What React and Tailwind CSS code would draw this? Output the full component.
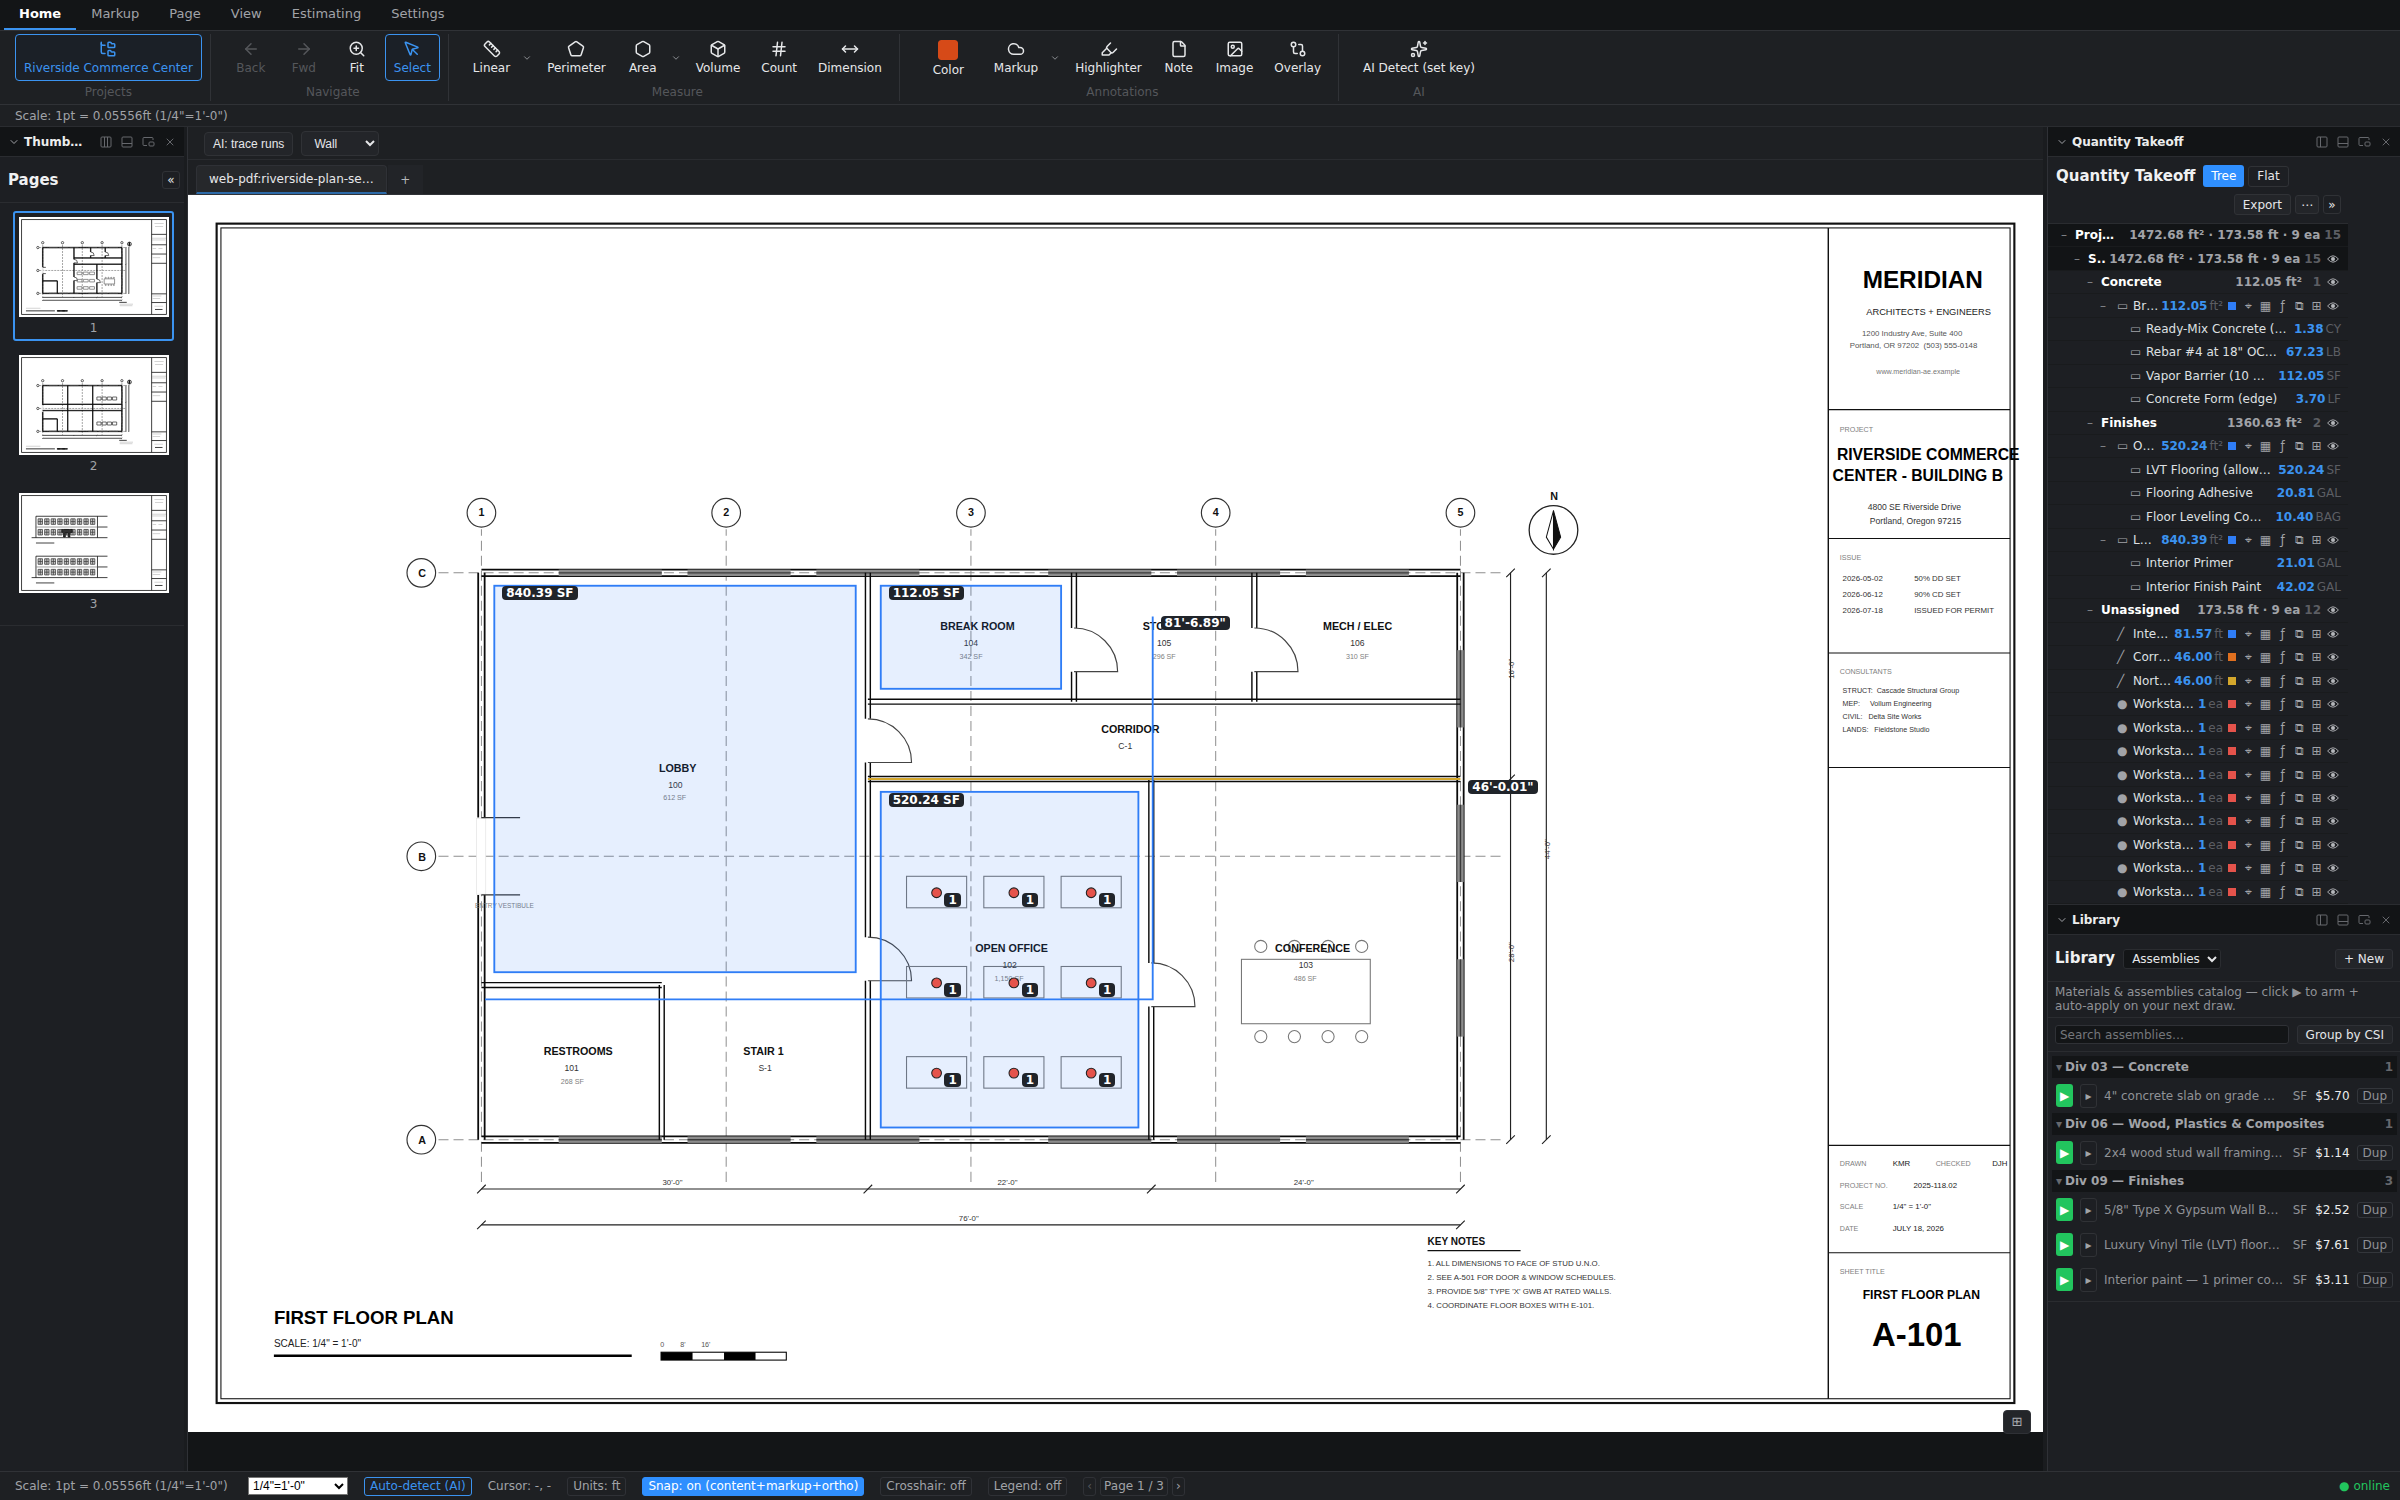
import React, { useState } from "react";
import {
  ArrowLeft,
  ArrowRight,
  Box,
  ChevronDown,
  Cloud,
  FolderTree,
  GitCompare,
  Hash,
  Hexagon,
  Highlighter,
  Image,
  MousePointer,
  MoveHorizontal,
  Pentagon,
  Ruler,
  Sparkles,
  File,
  X,
  ZoomIn,
} from "lucide-react";

const SHEET_W = 2592;
const SHEET_H = 1728;

// 1/4" = 1'-0" => 18pt per foot
const fx = (ft) => 410 + ft * 18;
const fy = (ft) => 528 + ft * 18;

const menuTabs = ["Home", "Markup", "Page", "View", "Estimating", "Settings"];

const ribbonGroups = [
  {
    name: "Projects",
    tools: [{ label: "Riverside Commerce Center", icon: FolderTree, active: true }],
  },
  {
    name: "Navigate",
    tools: [
      { label: "Back", icon: ArrowLeft, disabled: true },
      { label: "Fwd", icon: ArrowRight, disabled: true },
      { label: "Fit", icon: ZoomIn },
      { label: "Select", icon: MousePointer, active: true },
    ],
  },
  {
    name: "Measure",
    tools: [
      { label: "Linear", icon: Ruler, menu: true },
      { label: "Perimeter", icon: Pentagon },
      { label: "Area", icon: Hexagon, menu: true },
      { label: "Volume", icon: Box },
      { label: "Count", icon: Hash },
      { label: "Dimension", icon: MoveHorizontal },
    ],
  },
  {
    name: "Annotations",
    tools: [
      { label: "Color", color: true },
      { label: "Markup", icon: Cloud, menu: true },
      { label: "Highlighter", icon: Highlighter },
      { label: "Note", icon: File },
      { label: "Image", icon: Image },
      { label: "Overlay", icon: GitCompare },
    ],
  },
  {
    name: "AI",
    tools: [{ label: "AI Detect (set key)", icon: Sparkles }],
  },
];

const BLUE = "#2f7df6";
const ORANGE = "#e0701f";
const YELLOW = "#d4a72c";
const RED = "#e5534b";

const workstations = Array.from({ length: 9 }, () => (
  { kind: "item", icon: "●", name: "Worksta…", qty: "1", unit: "ea", color: RED }
));

const takeoffRows = [
  { kind: "group", level: 0, name: "Proj…", qty: "1472.68 ft² · 173.58 ft · 9 ea", count: 15, dark: true },
  { kind: "group", level: 1, name: "S..", qty: "1472.68 ft² · 173.58 ft · 9 ea", count: 15, dark: true, eye: true },
  { kind: "group", level: 2, name: "Concrete", qty: "112.05 ft²", count: 1, eye: true },
  { kind: "item", open: true, icon: "▭", name: "Br…", qty: "112.05", unit: "ft²", color: BLUE },
  { kind: "part", name: "Ready-Mix Concrete (…", qty: "1.38", unit: "CY" },
  { kind: "part", name: "Rebar #4 at 18\" OC…", qty: "67.23", unit: "LB" },
  { kind: "part", name: "Vapor Barrier (10 …", qty: "112.05", unit: "SF" },
  { kind: "part", name: "Concrete Form (edge)", qty: "3.70", unit: "LF" },
  { kind: "group", level: 2, name: "Finishes", qty: "1360.63 ft²", count: 2, eye: true },
  { kind: "item", open: true, icon: "▭", name: "O…", qty: "520.24", unit: "ft²", color: BLUE },
  { kind: "part", name: "LVT Flooring (allow…", qty: "520.24", unit: "SF" },
  { kind: "part", name: "Flooring Adhesive", qty: "20.81", unit: "GAL" },
  { kind: "part", name: "Floor Leveling Co…", qty: "10.40", unit: "BAG" },
  { kind: "item", open: true, icon: "▭", name: "L…", qty: "840.39", unit: "ft²", color: BLUE },
  { kind: "part", name: "Interior Primer", qty: "21.01", unit: "GAL" },
  { kind: "part", name: "Interior Finish Paint", qty: "42.02", unit: "GAL" },
  { kind: "group", level: 2, name: "Unassigned", qty: "173.58 ft · 9 ea", count: 12, eye: true },
  { kind: "item", icon: "╱", name: "Inte…", qty: "81.57", unit: "ft", color: BLUE },
  { kind: "item", icon: "╱", name: "Corr…", qty: "46.00", unit: "ft", color: ORANGE },
  { kind: "item", icon: "╱", name: "Nort…", qty: "46.00", unit: "ft", color: YELLOW },
  ...workstations,
];

const library = [
  {
    title: "Div 03 — Concrete",
    items: [{ name: "4\" concrete slab on grade …", price: "$5.70" }],
  },
  {
    title: "Div 06 — Wood, Plastics & Composites",
    items: [{ name: "2x4 wood stud wall framing…", price: "$1.14" }],
  },
  {
    title: "Div 09 — Finishes",
    items: [
      { name: "5/8\" Type X Gypsum Wall B…", price: "$2.52" },
      { name: "Luxury Vinyl Tile (LVT) floor…", price: "$7.61" },
      { name: "Interior paint — 1 primer co…", price: "$3.11" },
    ],
  },
];

const deskCols = [1046, 1154, 1262];
const deskRows = [975, 1101, 1227];
const deskSpots = deskRows.flatMap((y) => deskCols.map((x) => ({ x, y })));

/* ---------- drawing ---------- */

function Wall({ x1, y1, x2, y2, t = 3.4, w = 2 }) {
  const d = x1 === x2
    ? `M${x1 - t} ${y1}V${y2}M${x1 + t} ${y1}V${y2}`
    : `M${x1} ${y1 - t}H${x2}M${x1} ${y1 + t}H${x2}`;
  return <path d={d} fill="none" stroke="#0a0a0a" strokeWidth={w} />;
}

function Door({ x, y }) {
  return (
    <path
      d={`M${x} ${y - 61}A61 61 0 0 1 ${x + 61} ${y}H${x}`}
      fill="none"
      stroke="#444"
      strokeWidth="1.6"
    />
  );
}

function WindowRun({ x, y, length, vertical }) {
  const w = vertical ? 9 : length;
  const h = vertical ? length : 9;
  const left = vertical ? x - 4.5 : x;
  const top = vertical ? y : y - 4.5;
  return (
    <g>
      <rect x={left} y={top} width={w} height={h} fill="#8c8c8c" />
      <path
        d={vertical ? `M${x} ${y}v${length}` : `M${x} ${y}h${length}`}
        stroke="#3a3a3a"
        strokeWidth="2"
      />
    </g>
  );
}

function SheetFrame() {
  return (
    <g fill="none" stroke="#111">
      <rect x="40" y="40" width="2512" height="1648" strokeWidth="3" />
      <rect x="46" y="46" width="2500" height="1636" strokeWidth="1.5" />
      <path d="M2292 46V1682" strokeWidth="2" />
      <path
        d="M2292 300H2546M2292 480H2546M2292 640H2546M2292 800H2546M2292 1328H2546M2292 1478H2546"
        strokeWidth="1.6"
      />
    </g>
  );
}

function GridLines() {
  return (
    <g>
      <g stroke="#8f8f8f" strokeWidth="1.4" strokeDasharray="14 7" fill="none">
        {[0, 19, 38, 57, 76].map((ft) => (
          <path key={ft} d={`M${fx(ft)} 467V1379`} strokeDashoffset="5" />
        ))}
        {[0, 22, 44].map((ft) => (
          <path key={ft} d={`M350 ${fy(ft)}H1834`} />
        ))}
      </g>
      <g fill="#fff" stroke="#333" strokeWidth="1.6">
        {[0, 19, 38, 57, 76].map((ft) => (
          <circle key={ft} cx={fx(ft)} cy="444" r="20" />
        ))}
        {[0, 22, 44].map((ft) => (
          <circle key={ft} cx="326" cy={fy(ft)} r="20" />
        ))}
      </g>
    </g>
  );
}

function Shell() {
  return (
    <g>
      <Wall x1={fx(0)} y1={fy(0)} x2={fx(76)} y2={fy(0)} t={4.5} w={2.5} />
      <Wall x1={fx(0)} y1={fy(44)} x2={fx(76)} y2={fy(44)} t={4.5} w={2.5} />
      <Wall x1={fx(0)} y1={fy(0)} x2={fx(0)} y2={870} t={4.5} w={2.5} />
      <Wall x1={fx(0)} y1={978} x2={fx(0)} y2={fy(44)} t={4.5} w={2.5} />
      <Wall x1={fx(76)} y1={fy(0)} x2={fx(76)} y2={fy(44)} t={4.5} w={2.5} />
      {[6, 16, 26, 44, 54, 64].map((ft) => (
        <g key={ft}>
          <WindowRun x={fx(ft)} y={fy(0)} length={144} />
          <WindowRun x={fx(ft)} y={fy(44)} length={144} />
        </g>
      ))}
      {[6, 18, 30].map((ft) => (
        <WindowRun key={ft} x={fx(76)} y={fy(ft)} length={108} vertical />
      ))}
      <rect x="403" y="871" width="13" height="106" fill="#fff" stroke="#e4e4e4" strokeWidth="1" />
    </g>
  );
}

function Dimensions() {
  const tick = (x, y) => `M${x - 6} ${y + 6}L${x + 6} ${y - 6}`;
  return (
    <g fill="none" stroke="#222" strokeWidth="1.6">
      <path d={`M${fx(0)} 1389H${fx(76)}M${fx(0)} 1439H${fx(76)}`} />
      <path d={`M1848 ${fy(0)}V${fy(44)}M1898 ${fy(0)}V${fy(44)}`} />
      <path d={[0, 30, 52, 76].map((ft) => tick(fx(ft), 1389)).join("")} />
      <path d={[0, 76].map((ft) => tick(fx(ft), 1439)).join("")} />
      <path d={[0, 16, 44].map((ft) => tick(1848, fy(ft))).join("")} />
      <path d={[0, 44].map((ft) => tick(1898, fy(ft))).join("")} />
    </g>
  );
}

function SheetExtras() {
  return (
    <g>
      <path d="M120 1622H620" stroke="#000" strokeWidth="3.5" />
      <rect x="661" y="1617" width="175" height="11" fill="#fff" stroke="#000" strokeWidth="1.5" />
      <path d="M661 1617h44v11h-44zM749 1617h44v11h-44z" fill="#000" />
      <circle cx="1908" cy="468" r="34" fill="#fff" stroke="#222" strokeWidth="1.8" />
      <path d="M1908 441L1898 478L1908 495Z" fill="#fff" stroke="#111" strokeWidth="1.4" />
      <path d="M1908 441L1918 478L1908 495Z" fill="#111" stroke="#111" strokeWidth="1.4" />
      <path d="M1732 1475H1862" stroke="#111" strokeWidth="2" />
    </g>
  );
}

function FirstFloor() {
  const chairs = [1499, 1546, 1593, 1640];
  return (
    <g>
      <GridLines />
      <Shell />
      <path d={`M${fx(0)} 870h54M${fx(0)} 978h54`} stroke="#333" strokeWidth="1.8" />
      <Wall x1={fx(30)} y1={fy(0)} x2={fx(30)} y2={732} />
      <Wall x1={fx(30)} y1={793} x2={fx(30)} y2={1037} />
      <Wall x1={fx(30)} y1={1098} x2={fx(30)} y2={fy(44)} />
      <Door x={fx(30)} y={793} />
      <Door x={fx(30)} y={1098} />
      <Wall x1={fx(30)} y1={fy(10)} x2={fx(76)} y2={fy(10)} />
      <Wall x1={fx(30)} y1={fy(16)} x2={fx(76)} y2={fy(16)} />
      <Wall x1={fx(52)} y1={fy(16)} x2={fx(52)} y2={1073} />
      <Wall x1={fx(52)} y1={1134} x2={fx(52)} y2={fy(44)} />
      <Door x={fx(52)} y={1134} />
      <Wall x1={fx(46)} y1={fy(0)} x2={fx(46)} y2={605} />
      <Wall x1={fx(46)} y1={666} x2={fx(46)} y2={fy(10)} />
      <Door x={fx(46)} y={666} />
      <Wall x1={fx(60)} y1={fy(0)} x2={fx(60)} y2={605} />
      <Wall x1={fx(60)} y1={666} x2={fx(60)} y2={fy(10)} />
      <Door x={fx(60)} y={666} />
      <Wall x1={fx(0)} y1={fy(32)} x2={fx(14)} y2={fy(32)} />
      <Wall x1={fx(14)} y1={fy(32)} x2={fx(14)} y2={fy(44)} />
      <g fill="none" stroke="#777" strokeWidth="1.5">
        {deskSpots.map(({ x, y }) => (
          <rect key={`${x}-${y}`} x={x - 42} y={y - 23} width="84" height="44" />
        ))}
        <rect x="1472" y="1068" width="180" height="90" />
        {chairs.map((x) => (
          <g key={x}>
            <circle cx={x} cy="1050" r="8.5" />
            <circle cx={x} cy="1176" r="8.5" />
          </g>
        ))}
      </g>
      <Dimensions />
      <SheetExtras />
    </g>
  );
}

const roomLabels = [
  [658, 806, "LOBBY", 671, "100", 664, "612 SF"],
  [1051, 608, "BREAK ROOM", 1084, "104", 1078, "342 SF"],
  [1334, 608, "STORAGE", 1354, "105", 1348, "296 SF"],
  [1586, 608, "MECH / ELEC", 1624, "106", 1618, "310 SF"],
  [1276, 752, "CORRIDOR", 1300, "C-1"],
  [1100, 1058, "OPEN OFFICE", 1138, "102", 1127, "1,150 SF"],
  [1519, 1058, "CONFERENCE", 1552, "103", 1545, "486 SF"],
  [497, 1202, "RESTROOMS", 526, "101", 521, "268 SF"],
  [776, 1202, "STAIR 1", 797, "S-1"],
];

function T({ x, y, s = 10, b, c = "#111", children, ...rest }) {
  return (
    <text
      x={x}
      y={y}
      fontSize={s}
      fontWeight={b ? 700 : 400}
      fill={c}
      className="whitespace-pre"
      {...rest}
    >
      {children}
    </text>
  );
}

function SheetText() {
  const gray = "#808080";
  return (
    <g fontFamily="'Liberation Sans', Arial, sans-serif">
      {[0, 19, 38, 57, 76].map((ft, i) => (
        <T key={ft} x={fx(ft)} y="449" s={15} b textAnchor="middle">{i + 1}</T>
      ))}
      {["C", "B", "A"].map((name, i) => (
        <T key={name} x="327" y={fy(i * 22) + 6} s={15} b textAnchor="middle">{name}</T>
      ))}
      <T x="1909" y="426" s={15} b textAnchor="middle">N</T>

      {roomLabels.map(([x, y, name, nx, num, ax, area]) => (
        <g key={name}>
          <T x={x} y={y} s={15} b>{name}</T>
          <T x={nx} y={y + 22} s={12} c="#333">{num}</T>
          {area && <T x={ax} y={y + 40} s={10} c={gray}>{area}</T>}
        </g>
      ))}
      <T x="401" y="996" s={9} c={gray}>ENTRY VESTIBULE</T>

      <T x={fx(15) - 17} y="1384" s={11} c="#333">30'-0"</T>
      <T x={fx(41) - 17} y="1384" s={11} c="#333">22'-0"</T>
      <T x={fx(64) - 17} y="1384" s={11} c="#333">24'-0"</T>
      <T x={fx(38) - 17} y="1434" s={11} c="#333">76'-0"</T>
      <T x="0" y="0" s={11} c="#333" transform="translate(1853 676) rotate(-90)">16'-0"</T>
      <T x="0" y="0" s={11} c="#333" transform="translate(1853 1072) rotate(-90)">28'-0"</T>
      <T x="0" y="0" s={11} c="#333" transform="translate(1903 928) rotate(-90)">44'-0"</T>

      <T x="120" y="1577" s={26} b c="#000">FIRST FLOOR PLAN</T>
      <T x="120" y="1610" s={14} c="#222">SCALE: 1/4" = 1'-0"</T>
      <T x="660" y="1610" s={10} c="#555">0</T>
      <T x="688" y="1610" s={10} c="#555">8'</T>
      <T x="717" y="1610" s={10} c="#555">16'</T>

      <T x="1732" y="1467" s={14} b>KEY NOTES</T>
      <T x="1732" y="1496" s={11} c="#333">1. ALL DIMENSIONS TO FACE OF STUD U.N.O.</T>
      <T x="1732" y="1516" s={11} c="#333">2. SEE A-501 FOR DOOR & WINDOW SCHEDULES.</T>
      <T x="1732" y="1535" s={11} c="#333">3. PROVIDE 5/8" TYPE 'X' GWB AT RATED WALLS.</T>
      <T x="1732" y="1555" s={11} c="#333">4. COORDINATE FLOOR BOXES WITH E-101.</T>

      <T x="2340" y="130" s={34} b c="#000">MERIDIAN</T>
      <T x="2345" y="168" s={13} c="#222">ARCHITECTS + ENGINEERS</T>
      <T x="2339" y="197" s={11} c="#555">1200 Industry Ave, Suite 400</T>
      <T x="2322" y="214" s={11} c="#555">{"Portland, OR 97202  (503) 555-0148"}</T>
      <T x="2359" y="250" s={10} c="#777">www.meridian-ae.example</T>

      <T x="2308" y="331" c={gray}>PROJECT</T>
      <T x="2304" y="370" s={22} b c="#000">RIVERSIDE COMMERCE</T>
      <T x="2298" y="400" s={22} b c="#000">CENTER - BUILDING B</T>
      <T x="2347" y="440" s={12} c="#333">4800 SE Riverside Drive</T>
      <T x="2350" y="460" s={12} c="#333">Portland, Oregon 97215</T>

      <T x="2308" y="510" c={gray}>ISSUE</T>
      {[["2026-05-02", "50% DD SET"], ["2026-06-12", "90% CD SET"], ["2026-07-18", "ISSUED FOR PERMIT"]].map(([date, set], i) => (
        <g key={date}>
          <T x="2312" y={540 + i * 22} s={11} c="#333">{date}</T>
          <T x="2412" y={540 + i * 22} s={11} c="#333">{set}</T>
        </g>
      ))}

      <T x="2308" y="670" c={gray}>CONSULTANTS</T>
      <T x="2312" y="696" c="#333">{"STRUCT:  Cascade Structural Group"}</T>
      <T x="2312" y="714" c="#333">{"MEP:     Vollum Engineering"}</T>
      <T x="2312" y="732" c="#333">{"CIVIL:   Delta Site Works"}</T>
      <T x="2312" y="750" c="#333">{"LANDS:   Fieldstone Studio"}</T>

      <T x="2308" y="1357" c={gray}>DRAWN</T>
      <T x="2382" y="1357" s={11} c="#222">KMR</T>
      <T x="2442" y="1357" c={gray}>CHECKED</T>
      <T x="2521" y="1357" s={11} c="#222">DJH</T>
      <T x="2308" y="1387" c={gray}>PROJECT NO.</T>
      <T x="2411" y="1387" s={11} c="#222">2025-118.02</T>
      <T x="2308" y="1417" c={gray}>SCALE</T>
      <T x="2382" y="1417" s={11} c="#222">1/4" = 1'-0"</T>
      <T x="2308" y="1447" c={gray}>DATE</T>
      <T x="2382" y="1447" s={11} c="#222">JULY 18, 2026</T>

      <T x="2308" y="1508" c={gray}>SHEET TITLE</T>
      <T x="2340" y="1542" s={17} b c="#000">FIRST FLOOR PLAN</T>
      <T x="2353" y="1608" s={46} b c="#000">A-101</T>
    </g>
  );
}

function Markups() {
  return (
    <g>
      <g fill={BLUE} fillOpacity="0.12" stroke={BLUE} strokeWidth="2.6">
        <rect x="428" y="546" width="505" height="540" />
        <rect x="968" y="546" width="252" height="144" />
        <rect x="968" y="834" width="360" height="469" />
      </g>
      <path d={`M${fx(30)} 816H${fx(76)}`} stroke={YELLOW} strokeWidth="3" />
      <path d="M1348 589V1124H415" fill="none" stroke={BLUE} strokeWidth="2.6" />
      <g fill={RED} stroke="#222" strokeWidth="1.5">
        {deskSpots.map(({ x, y }) => (
          <circle key={`${x}-${y}`} cx={x} cy={y} r="6.8" />
        ))}
      </g>
    </g>
  );
}

const markupTags = [
  { x: 439, y: 547, text: "840.39 SF" },
  { x: 979, y: 547, text: "112.05 SF" },
  { x: 979, y: 835, text: "520.24 SF" },
  { x: 1359, y: 588, text: "81'-6.89\"" },
  { x: 1789, y: 817, text: "46'-0.01\"" },
  ...deskSpots.map(({ x, y }) => ({ x: x + 11, y, text: "1" })),
];

function PlanSheet() {
  return (
    <div className="relative bg-white">
      <svg viewBox={`0 0 ${SHEET_W} ${SHEET_H}`} className="block w-full">
        <SheetFrame />
        <FirstFloor />
        <SheetText />
        <Markups />
      </svg>
      {markupTags.map(({ x, y, text }) => (
        <span
          key={`${x}-${y}`}
          className="absolute rounded bg-[#20242a] px-1 text-xs leading-[14px] font-bold text-white"
          style={{ left: `${(x / SHEET_W) * 100}%`, top: `${(y / SHEET_H) * 100}%` }}
        >
          {text}
        </span>
      ))}
      <button
        aria-label="Minimap"
        className="absolute right-3 -bottom-0.5 h-6 w-7 rounded border border-[#2f3136] bg-[#232529] text-[13px] leading-none text-[#a9abb0]"
      >
        ⊞
      </button>
    </div>
  );
}

/* ---------- thumbnails ---------- */

function MiniText() {
  const bars = [
    [2340, 110, 160], [2350, 160, 140], [2300, 360, 240], [2300, 392, 230],
    [2310, 540, 60], [2410, 540, 70], [2310, 700, 130], [2310, 1360, 150],
    [2310, 1400, 130], [2340, 1535, 150],
  ];
  return (
    <g>
      {bars.map(([x, y, w]) => (
        <rect key={`${x}-${y}`} x={x} y={y} width={w} height="10" fill="#b5b5b5" />
      ))}
      <path d="M2350 1598h130" stroke="#111" />
    </g>
  );
}

function MiniNotes() {
  return (
    <g fill="#b5b5b5">
      <rect x="120" y="1570" width="250" height="10" />
      <rect x="1740" y="1500" width="230" height="10" />
      <rect x="1740" y="1530" width="220" height="10" />
    </g>
  );
}

function SecondFloor() {
  const tables = [52, 57, 62, 67];
  return (
    <g>
      <GridLines />
      <Shell />
      <Wall x1={fx(24)} y1={fy(0)} x2={fx(24)} y2={fy(44)} />
      <Wall x1={fx(48)} y1={fy(0)} x2={fx(48)} y2={fy(44)} />
      <Wall x1={fx(0)} y1={fy(18)} x2={fx(76)} y2={fy(18)} />
      <Wall x1={fx(0)} y1={fy(24)} x2={fx(76)} y2={fy(24)} />
      <Wall x1={fx(0)} y1={fy(32)} x2={fx(14)} y2={fy(32)} />
      <Wall x1={fx(14)} y1={fy(32)} x2={fx(14)} y2={fy(44)} />
      <g fill="none" stroke="#444">
        {tables.map((ft) => (
          <g key={ft}>
            <rect x={fx(ft)} y={fy(11)} width="72" height="52" />
            <rect x={fx(ft)} y={fy(35)} width="72" height="52" />
          </g>
        ))}
      </g>
      <Dimensions />
      <SheetExtras />
    </g>
  );
}

function Elevations() {
  const bays = Array.from({ length: 9 }, (_, i) => 368 + i * 113);
  return (
    <g fill="none" stroke="#111">
      {[402, 1092].map((top) => (
        <g key={top}>
          <path d={`M293 ${top}H1529M1356 ${top + 186}H1529M218 ${top + 370}H1529`} />
          <path d={`M293 ${top}v370M1356 ${top}v370`} />
          <path d={`M293 ${top + 186}H1356`} stroke="#888" />
          <path d={`M293 ${top + 462}h317`} />
          {[92, 276].map((dy) => bays.map((x) => (
            <g key={`${x}-${dy}`} stroke="#444">
              <rect x={x - 38} y={top + dy - 48} width="76" height="96" fill="#c4c4c4" />
              <path d={`M${x} ${top + dy - 48}v96M${x - 38} ${top + dy}h76`} />
            </g>
          )))}
        </g>
      ))}
      <path d="M740 630h180v50h-40v80h-30v-70h-50v70h-30v-80h-30z" fill="#333" />
    </g>
  );
}

function Thumb({ page, selected, onSelect, children }) {
  return (
    <button
      onClick={() => onSelect(page)}
      className={`flex w-full flex-col items-center rounded-[3px] border-2 pt-1 pb-0.5 ${selected ? "border-[#3b93f0]" : "border-transparent"}`}
    >
      <svg
        viewBox={`0 0 ${SHEET_W} ${SHEET_H}`}
        className="block w-[150px] bg-white [&_*]:[stroke-width:0.8px] [&_*]:[vector-effect:non-scaling-stroke] [&_[stroke-dasharray]]:[stroke-dasharray:2_1]"
      >
        {children}
      </svg>
      <span className="mt-[3px] text-xs leading-[17px] text-[#a1a3a8]">{page}</span>
    </button>
  );
}

// Frame for the thumbnails, where every line keeps a hairline weight
function MiniFrame() {
  return (
    <g fill="none" stroke="#111">
      <rect x="44" y="44" width="2504" height="1640" />
      <path d="M2292 46V1682" />
      <path d="M2292 300H2546M2292 480H2546M2292 640H2546M2292 800H2546M2292 1328H2546M2292 1478H2546" />
    </g>
  );
}

/* ---------- chrome ---------- */

function MenuBar({ active, onSelect }) {
  return (
    <nav className="flex h-[31px] border-b border-[#303236] bg-[#131517] px-1">
      {menuTabs.map((tab) => (
        <button
          key={tab}
          onClick={() => onSelect(tab)}
          className={`border-b-2 px-[15px] text-[13px] ${active === tab ? "border-[#3b93f0] font-bold text-white" : "border-transparent text-[#a1a3a8]"}`}
        >
          {tab}
        </button>
      ))}
    </nav>
  );
}

function Tool({ tool }) {
  const Icon = tool.icon;

  if (tool.color) {
    return (
      <label className="flex h-[49px] w-[67px] flex-col items-center justify-center gap-[3px] text-xs leading-[14px] text-[#e6e7e9]">
        <input
          type="color"
          defaultValue="#d64a18"
          className="h-5 w-5 rounded-[3px] [&::-webkit-color-swatch]:rounded-[3px] [&::-webkit-color-swatch]:border-0 [&::-webkit-color-swatch-wrapper]:p-0"
        />
        {tool.label}
      </label>
    );
  }

  let look = "border-transparent text-[#e6e7e9]";
  if (tool.active) look = "border-[#3b93f0] text-[#3b93f0] bg-[#1b2027]";
  if (tool.disabled) look = "border-transparent text-[#55575b]";

  return (
    <div className="flex items-center">
      <button
        disabled={tool.disabled}
        className={`flex h-[47px] min-w-[50px] flex-col items-center justify-center gap-[3px] rounded border px-2 text-xs leading-[14px] whitespace-nowrap ${look}`}
      >
        <Icon size={18} />
        {tool.label}
      </button>
      {tool.menu && (
        <button aria-label={`${tool.label} options`} className="w-4 text-[#a1a3a8]">
          <ChevronDown size={10} className="mx-auto" />
        </button>
      )}
    </div>
  );
}

function Ribbon() {
  return (
    <div className="flex gap-[7px] border-b border-[#303236] bg-[#1e2023] px-[7px] py-[3px]">
      {ribbonGroups.map((group, i) => (
        <section
          key={group.name}
          className={`flex flex-col items-center gap-px px-2 ${i < ribbonGroups.length - 1 ? "border-r border-[#303236]" : ""}`}
        >
          <div className="flex h-[49px] items-start gap-[3px]">
            {group.tools.map((tool) => <Tool key={tool.label} tool={tool} />)}
          </div>
          <h2 className="text-xs leading-[17px] text-[#55575b]">{group.name}</h2>
        </section>
      ))}
    </div>
  );
}

function PanelHeader({ title, side = "right" }) {
  return (
    <header className="flex h-[30px] shrink-0 items-center border-b border-[#2a2c30] bg-[#121416] pt-px pr-2 pl-2">
      <ChevronDown size={12} className="mr-1 text-[#a1a3a8]" />
      <h2 className="text-xs font-bold text-[#eceded]">{title}</h2>
      <div className="ml-auto flex items-center gap-[9px] text-[#66686d]">
        <button aria-label="Dock side">
          <svg width="12" height="12" viewBox="0 0 12 12" fill="none" stroke="currentColor" className="block">
            <rect x="1" y="1" width="10" height="10" rx="1" />
            <path d={side === "left" ? "M7.5 1V11M4.5 1V11" : "M4.5 1V11"} />
          </svg>
        </button>
        <button aria-label="Dock bottom">
          <svg width="12" height="12" viewBox="0 0 12 12" fill="none" stroke="currentColor" className="block">
            <rect x="1" y="1" width="10" height="10" rx="1" />
            <path d="M1 7.5H11" />
          </svg>
        </button>
        <button aria-label="Float">
          <svg width="13" height="12" viewBox="0 0 13 12" fill="none" stroke="currentColor" className="block">
            <path d="M5 9.5H2a1 1 0 0 1-1-1V2.5a1 1 0 0 1 1-1H10a1 1 0 0 1 1 1V4" />
            <rect x="7" y="6" width="5" height="4" rx="1" />
          </svg>
        </button>
        <button aria-label="Close">
          <X size={12} />
        </button>
      </div>
    </header>
  );
}

function PagesPanel() {
  const [page, setPage] = useState(1);
  return (
    <aside className="w-[184px] shrink-0 bg-[#1d1f23]">
      <PanelHeader title="Thumb…" side="left" />
      <div className="flex h-[46px] items-center justify-between border-b border-[#2a2c30] pt-px pr-1 pl-2">
        <h3 className="text-[15px] font-bold text-[#f0f1f2]">Pages</h3>
        <button aria-label="Collapse pages" className="h-[18px] w-[18px] rounded-[3px] border border-[#303236] text-xs leading-none text-[#e6e7e9]">«</button>
      </div>
      <div className="flex flex-col gap-2 border-b border-[#2a2c30] py-2 pr-[10px] pl-[13px]">
        <Thumb page={1} selected={page === 1} onSelect={setPage}>
          <FirstFloor />
          <MiniText />
          <MiniNotes />
          <MiniFrame />
        </Thumb>
        <Thumb page={2} selected={page === 2} onSelect={setPage}>
          <SecondFloor />
          <MiniText />
          <MiniNotes />
          <MiniFrame />
        </Thumb>
        <Thumb page={3} selected={page === 3} onSelect={setPage}>
          <Elevations />
          <MiniText />
          <MiniFrame />
        </Thumb>
      </div>
    </aside>
  );
}

function Workspace() {
  return (
    <main className="flex min-w-0 flex-1 flex-col bg-[#131517]">
      <div className="flex h-[33px] shrink-0 items-center gap-2 border-b border-[#2a2c30] bg-[#1e2023] px-4 pt-px font-['Liberation_Sans',Arial,sans-serif] text-xs text-[#e6e7e9]">
        <button className="h-6 rounded border border-[#303236] bg-[#232529] px-2">AI: trace runs</button>
        <select aria-label="Trace type" defaultValue="Wall" className="h-[25px] w-[78px] rounded border border-[#303236] bg-[#232529] px-2">
          <option>Wall</option>
          <option>Pipe</option>
        </select>
      </div>
      <div className="flex h-[35px] shrink-0 items-end gap-px border-b border-[#303236] bg-[#1e2023] px-2 text-xs">
        <button className="h-[29px] rounded-t border border-b-2 border-[#2f3136] border-b-[#2c6aa8] bg-[#26282b] px-3 text-[#e6e7e9]">
          web-pdf:riverside-plan-se…
        </button>
        <button aria-label="New tab" className="h-[29px] w-[35px] bg-[#222428] text-[#b5b7bb]">+</button>
      </div>
      <PlanSheet />
    </main>
  );
}

function Eye() {
  return (
    <button aria-label="Toggle visibility" className="ml-1 w-4 text-[#b5b7bb]">
      <svg width="12" height="8" viewBox="0 0 12 8" fill="none" stroke="currentColor" className="mx-auto block">
        <path d="M0.6 4Q6 -2.4 11.4 4Q6 10.4 0.6 4Z" strokeWidth="0.9" />
        <circle cx="6" cy="4" r="2" fill="currentColor" stroke="none" />
      </svg>
    </button>
  );
}

function TakeoffRow({ row }) {
  const line = "flex min-h-0 items-center border-b border-[#191b1d] pr-[7px] text-xs whitespace-nowrap";

  if (row.kind === "group") {
    const indent = ["pl-[13px]", "pl-[26px]", "pl-[39px]"][row.level];
    return (
      <li className={`${line} ${indent} ${row.dark ? "bg-[#121416]" : ""}`}>
        <button aria-label="Collapse" className="w-[14px] text-left text-[#85878c]">–</button>
        <span className="font-bold text-white">{row.name}</span>
        <span className="ml-auto font-bold text-[#a1a3a8]">{row.qty}</span>
        <span className="ml-1 min-w-[15px] text-right font-bold text-[#5c5e63]">{row.count}</span>
        {row.eye && <Eye />}
      </li>
    );
  }

  if (row.kind === "part") {
    return (
      <li className={`${line} pl-[82px]`}>
        <span className="w-4 text-[#a1a3a8]">▭</span>
        <span className="text-[#dfe0e2]">{row.name}</span>
        <span className="ml-auto font-bold text-[#3b93f0]">{row.qty}</span>
        <span className="ml-0.5 text-[#5c5e63]">{row.unit}</span>
      </li>
    );
  }

  return (
    <li className={`${line} pl-[52px]`}>
      <span className="w-[17px] text-[#85878c]">{row.open ? "–" : ""}</span>
      <span className="w-4 text-[#a1a3a8]">{row.icon}</span>
      <span className="text-[#dfe0e2]">{row.name}</span>
      <span className="ml-auto font-bold text-[#3b93f0]">{row.qty}</span>
      <span className="ml-0.5 text-[#5c5e63]">{row.unit}</span>
      <span className="mr-1 ml-[5px] h-2 w-2" style={{ backgroundColor: row.color }} />
      <div className="flex text-xs text-[#a1a3a8]">
        {["⌖", "▦", "ƒ", "⧉", "⊞"].map((glyph) => (
          <button key={glyph} className="w-[17px] text-center">{glyph}</button>
        ))}
      </div>
      <span className="-ml-1 flex"><Eye /></span>
    </li>
  );
}

function TakeoffPanel() {
  return (
    <section>
      <PanelHeader title="Quantity Takeoff" />
      <div className="w-[300px]">
        <div className="border-b border-[#2a2c30] pt-2 pr-[7px] pb-2 pl-2 text-xs text-[#e6e7e9]">
          <div className="flex items-center gap-1">
            <h3 className="mr-1 text-[15px] leading-[21px] font-bold text-[#f0f1f2]">Quantity Takeoff</h3>
            <button className="h-[22px] rounded-[3px] bg-[#2f8fff] px-2 text-white">Tree</button>
            <button className="h-[21px] rounded-[3px] border border-[#303236] px-2">Flat</button>
          </div>
          <div className="mt-[7px] flex items-center justify-end gap-1">
            <button className="h-[21px] rounded-[3px] border border-[#303236] bg-[#232529] px-2">Export</button>
            <button aria-label="More" className="h-[19px] w-6 rounded-[3px] border border-[#303236] bg-[#232529] leading-none">⋯</button>
            <button aria-label="Collapse panel" className="h-[19px] w-[18px] rounded-[3px] border border-[#303236] leading-none">»</button>
          </div>
        </div>
        <ul className="grid h-[680px] auto-rows-fr">
          {takeoffRows.map((row, index) => <TakeoffRow key={index} row={row} />)}
        </ul>
      </div>
    </section>
  );
}

function LibraryPanel() {
  return (
    <section className="border-t border-[#2a2c30]">
      <PanelHeader title="Library" />
      <div className="flex h-[47px] items-center border-b border-[#2a2c30] px-[7px] pt-px text-xs text-[#e6e7e9]">
        <h3 className="mr-2 text-[15px] font-bold text-[#f0f1f2]">Library</h3>
        <select aria-label="Library kind" defaultValue="Assemblies" className="h-5 w-[98px] rounded-[3px] border border-[#2a2c30] bg-[#131517] px-1">
          <option>Assemblies</option>
          <option>Materials</option>
        </select>
        <button className="ml-auto h-5 rounded-[3px] border border-[#2f3136] bg-[#232529] px-2">+ New</button>
      </div>
      <p className="border-b border-[#2a2c30] px-[7px] pt-[3px] pb-1 text-xs leading-[14px] text-[#909297]">
        Materials & assemblies catalog — click ▶ to arm + auto-apply on your next draw.
      </p>
      <div className="flex h-[34px] items-center gap-2 border-b border-[#2a2c30] px-[7px] text-xs">
        <input
          type="search"
          aria-label="Search assemblies"
          placeholder="Search assemblies…"
          className="h-[19px] min-w-0 flex-1 rounded-[3px] border border-[#2f3136] bg-[#131517] px-1 text-[#e6e7e9] placeholder:text-[#75777b]"
        />
        <button className="h-[19px] rounded-[3px] border border-[#2f3136] bg-[#232529] px-2 leading-none text-[#e6e7e9]">Group by CSI</button>
      </div>
      <div className="border-b border-[#2a2c30] py-1 pr-[3px] pl-1">
        {library.map((division) => (
          <div key={division.title}>
            <h4 className="flex h-[22px] items-center bg-[#131517] px-1 text-xs font-bold text-[#a1a3a8]">
              <span className="w-[9px] font-normal text-[#66686d]">▾</span>
              {division.title}
              <span className="ml-auto text-[#66686d]">{division.items.length}</span>
            </h4>
            {division.items.map((item) => (
              <div key={item.name} className="flex h-[35px] items-center pr-1 pl-1 text-xs whitespace-nowrap text-[#909297]">
                <button aria-label={`Arm ${item.name}`} className="h-[23px] w-[17px] rounded-[3px] bg-[#22c55e] text-white">▶</button>
                <button aria-label={`Expand ${item.name}`} className="ml-[7px] h-[24px] w-[17px] rounded-[3px] border border-[#303236] text-[#a1a3a8]">▸</button>
                <span className="ml-[7px]">{item.name}</span>
                <span className="ml-auto">SF</span>
                <span className="ml-2 text-[#eceded]">{item.price}</span>
                <button className="ml-[7px] h-4 rounded-[3px] border border-[#33363b] px-[5px] leading-none">Dup</button>
              </div>
            ))}
          </div>
        ))}
      </div>
    </section>
  );
}

function StatusBar() {
  const chip = "h-[19px] rounded-[3px] border px-[5px] leading-none";
  const pager = "h-[19px] rounded-[3px] border border-[#2f3136] px-[3px] leading-none";
  return (
    <footer className="flex h-[29px] shrink-0 items-center gap-4 border-t border-[#303236] bg-[#1e2023] pr-2.5 pl-[15px] text-xs whitespace-nowrap text-[#a1a3a8]">
      <span className="w-[217px]">Scale: 1pt = 0.05556ft (1/4"=1'-0")</span>
      <select
        aria-label="Scale"
        className="h-[18px] w-[100px] border border-[#767676] bg-white font-['Liberation_Sans',Arial,sans-serif] text-xs text-black"
      >
        <option>1/4"=1'-0"</option>
        <option>1/8"=1'-0"</option>
      </select>
      <button className={`${chip} border-[#3b93f0] text-[#3b93f0]`}>Auto-detect (AI)</button>
      <span>Cursor: -, -</span>
      <button className={`${chip} border-[#2f3136]`}>Units: ft</button>
      <button className={`${chip} border-[#2f8fff] bg-[#2f8fff] text-white`}>Snap: on (content+markup+ortho)</button>
      <button className={`${chip} border-[#2f3136]`}>Crosshair: off</button>
      <button className={`${chip} border-[#2f3136]`}>Legend: off</button>
      <div className="flex gap-1">
        <button aria-label="Previous page" disabled className={`${pager} text-[#55575b]`}>‹</button>
        <button className={pager}>Page 1 / 3</button>
        <button aria-label="Next page" className={pager}>›</button>
      </div>
      <span className="ml-auto text-[#22c55e]">● online</span>
    </footer>
  );
}

function App() {
  const [menu, setMenu] = useState("Home");
  return (
    <div className="flex h-screen flex-col overflow-hidden bg-[#1d1f23] font-['DejaVu_Sans',sans-serif]">
      <MenuBar active={menu} onSelect={setMenu} />
      <Ribbon />
      <div className="flex h-[22px] shrink-0 items-center border-b border-[#2a2c30] bg-[#1e2023] pl-[15px] text-xs text-[#a1a3a8]">
        Scale: 1pt = 0.05556ft (1/4"=1'-0")
      </div>
      <div className="flex min-h-0 flex-1">
        <PagesPanel />
        <div className="w-1 shrink-0 border-r border-[#2f3136] bg-[#1a1c1f]" />
        <Workspace />
        <div className="w-[5px] shrink-0 border-r border-[#2f3136] bg-[#1a1c1f]" />
        <aside className="w-[352px] shrink-0 bg-[#1d1f23]">
          <TakeoffPanel />
          <LibraryPanel />
        </aside>
      </div>
      <StatusBar />
    </div>
  );
}

export default App;
